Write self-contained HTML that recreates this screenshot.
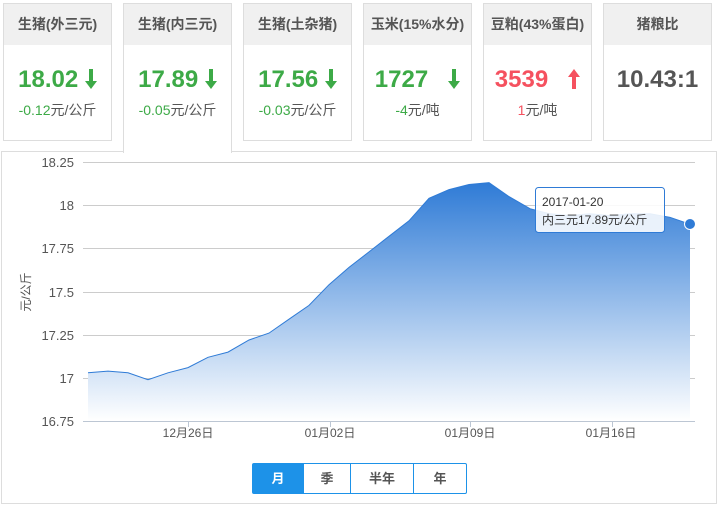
<!DOCTYPE html>
<html><head><meta charset="utf-8"><style>
*{margin:0;padding:0;box-sizing:border-box}
body{width:720px;height:511px;background:#fff;font-family:"Liberation Sans","Noto Sans CJK SC",sans-serif;position:relative;overflow:hidden}
.card{position:absolute;top:3px;width:109px;height:138px;border:1px solid #ddd;background:#fff;text-align:center}
.card .h{height:41px;background:#f0f0f0;line-height:41px;font-size:14px;font-weight:bold;color:#555}
.card .v{margin-top:20px;font-size:24px;font-weight:bold;line-height:30px}
.card .s{margin-top:5px;font-size:14px;color:#555}
.g{color:#3daa47}.r{color:#f5515f}
.card svg{vertical-align:-2px}
.act{height:150px;border-bottom:none;z-index:2}
.panel{position:absolute;left:1px;top:151px;width:716px;height:353px;border:1px solid #ddd;background:#fff}
.btns{position:absolute;left:252px;top:463px;height:31px;display:flex;border:1px solid #1d92e8;border-radius:2px;z-index:3}
.btns div{height:29px;line-height:29px;text-align:center;font-size:13px;font-weight:bold;color:#555;border-left:1px solid #1d92e8}
.btns div:first-child{border-left:none;background:#1d92e8;color:#fff}
</style></head><body>
<div class="card" style="left:3px"><div class="h">生猪(外三元)</div><div class="v g">18.02 <svg width="12" height="20" viewBox="0 0 12 20"><path d="M4 0h4v12h4l-6 8-6-8h4z" fill="#3daa47"/></svg></div><div class="s"><span class="g">-0.12</span>元/公斤</div></div>
<div class="card act" style="left:123px"><div class="h">生猪(内三元)</div><div class="v g">17.89 <svg width="12" height="20" viewBox="0 0 12 20"><path d="M4 0h4v12h4l-6 8-6-8h4z" fill="#3daa47"/></svg></div><div class="s"><span class="g">-0.05</span>元/公斤</div></div>
<div class="card" style="left:243px"><div class="h">生猪(土杂猪)</div><div class="v g">17.56 <svg width="12" height="20" viewBox="0 0 12 20"><path d="M4 0h4v12h4l-6 8-6-8h4z" fill="#3daa47"/></svg></div><div class="s"><span class="g">-0.03</span>元/公斤</div></div>
<div class="card" style="left:363px"><div class="h">玉米(15%水分)</div><div class="v g">1727 &nbsp;&nbsp;<svg width="12" height="20" viewBox="0 0 12 20"><path d="M4 0h4v12h4l-6 8-6-8h4z" fill="#3daa47"/></svg></div><div class="s"><span class="g">-4</span>元/吨</div></div>
<div class="card" style="left:483px"><div class="h">豆粕(43%蛋白)</div><div class="v r">3539 &nbsp;&nbsp;<svg width="12" height="20" viewBox="0 0 12 20"><path d="M4 20h4v-12h4l-6-8-6 8h4z" fill="#f5515f"/></svg></div><div class="s"><span class="r">1</span>元/吨</div></div>
<div class="card" style="left:603px"><div class="h">猪粮比</div><div class="v" style="color:#555">10.43:1</div></div>
<div class="panel"></div>
<svg style="position:absolute;left:0;top:0;z-index:2" width="720" height="511" font-family="Liberation Sans,Noto Sans CJK SC,sans-serif">
<defs><linearGradient id="gr" x1="0" y1="0" x2="0" y2="1"><stop offset="0" stop-color="#2f7bd6"/><stop offset="1" stop-color="#fff"/></linearGradient></defs>
<g stroke="#ccc" stroke-width="1">
<line x1="83" y1="162.5" x2="695" y2="162.5"/><line x1="83" y1="205.5" x2="695" y2="205.5"/><line x1="83" y1="248.5" x2="695" y2="248.5"/><line x1="83" y1="292.5" x2="695" y2="292.5"/><line x1="83" y1="335.5" x2="695" y2="335.5"/><line x1="83" y1="378.5" x2="695" y2="378.5"/>
</g>
<polygon fill="url(#gr)" points="88,421 88,372.8 108,371.1 128,372.8 148,379.7 168,372.8 188,367.6 208,357.3 228,352.1 249,340 269,333.1 289,319.2 309,305.4 329,284.7 349,267.4 369,251.9 389,236.3 409,220.8 429,198.3 449,189.6 469,184.5 489,182.7 509,196.6 530,208.7 550,213.8 570,215.6 590,213.8 610,215.6 630,213.8 650,213.8 670,217.3 690,224.2 690,421"/>
<polyline fill="none" stroke="#2f7bd6" stroke-width="1" points="88,372.8 108,371.1 128,372.8 148,379.7 168,372.8 188,367.6 208,357.3 228,352.1 249,340 269,333.1 289,319.2 309,305.4 329,284.7 349,267.4 369,251.9 389,236.3 409,220.8 429,198.3 449,189.6 469,184.5 489,182.7 509,196.6 530,208.7 550,213.8 570,215.6 590,213.8 610,215.6 630,213.8 650,213.8 670,217.3 690,224.2"/>
<line x1="83" y1="421.5" x2="695" y2="421.5" stroke="#bcc6d3"/>
<g stroke="#bcc6d3"><line x1="188.5" y1="421" x2="188.5" y2="427"/><line x1="330.5" y1="421" x2="330.5" y2="427"/><line x1="470.5" y1="421" x2="470.5" y2="427"/><line x1="612.5" y1="421" x2="612.5" y2="427"/></g>
<g font-size="13" fill="#555" text-anchor="end">
<text x="74" y="167">18.25</text><text x="74" y="210">18</text><text x="74" y="253">17.75</text><text x="74" y="297">17.5</text><text x="74" y="340">17.25</text><text x="74" y="383">17</text><text x="74" y="426">16.75</text></g>
<g font-size="12" fill="#555" text-anchor="middle">
<text x="188" y="437">12月26日</text><text x="330" y="437">01月02日</text><text x="470" y="437">01月09日</text><text x="611" y="437">01月16日</text></g>
<text transform="translate(30,292) rotate(-90)" font-size="12" fill="#555" text-anchor="middle">元/公斤</text>
<circle cx="690" cy="224" r="5.5" fill="#2f7bd6" stroke="#fff" stroke-width="1"/>
<rect x="535.5" y="187.5" width="129" height="45" rx="3" fill="#fff" fill-opacity="0.88" stroke="#2f7bd6"/>
<text x="542" y="206" font-size="12" fill="#333">2017-01-20</text>
<text x="542" y="224" font-size="12" fill="#333">内三元17.89元/公斤</text>
</svg>
<div class="btns"><div style="width:50px">月</div><div style="width:47px">季</div><div style="width:63px">半年</div><div style="width:53px">年</div></div>
</body></html>
